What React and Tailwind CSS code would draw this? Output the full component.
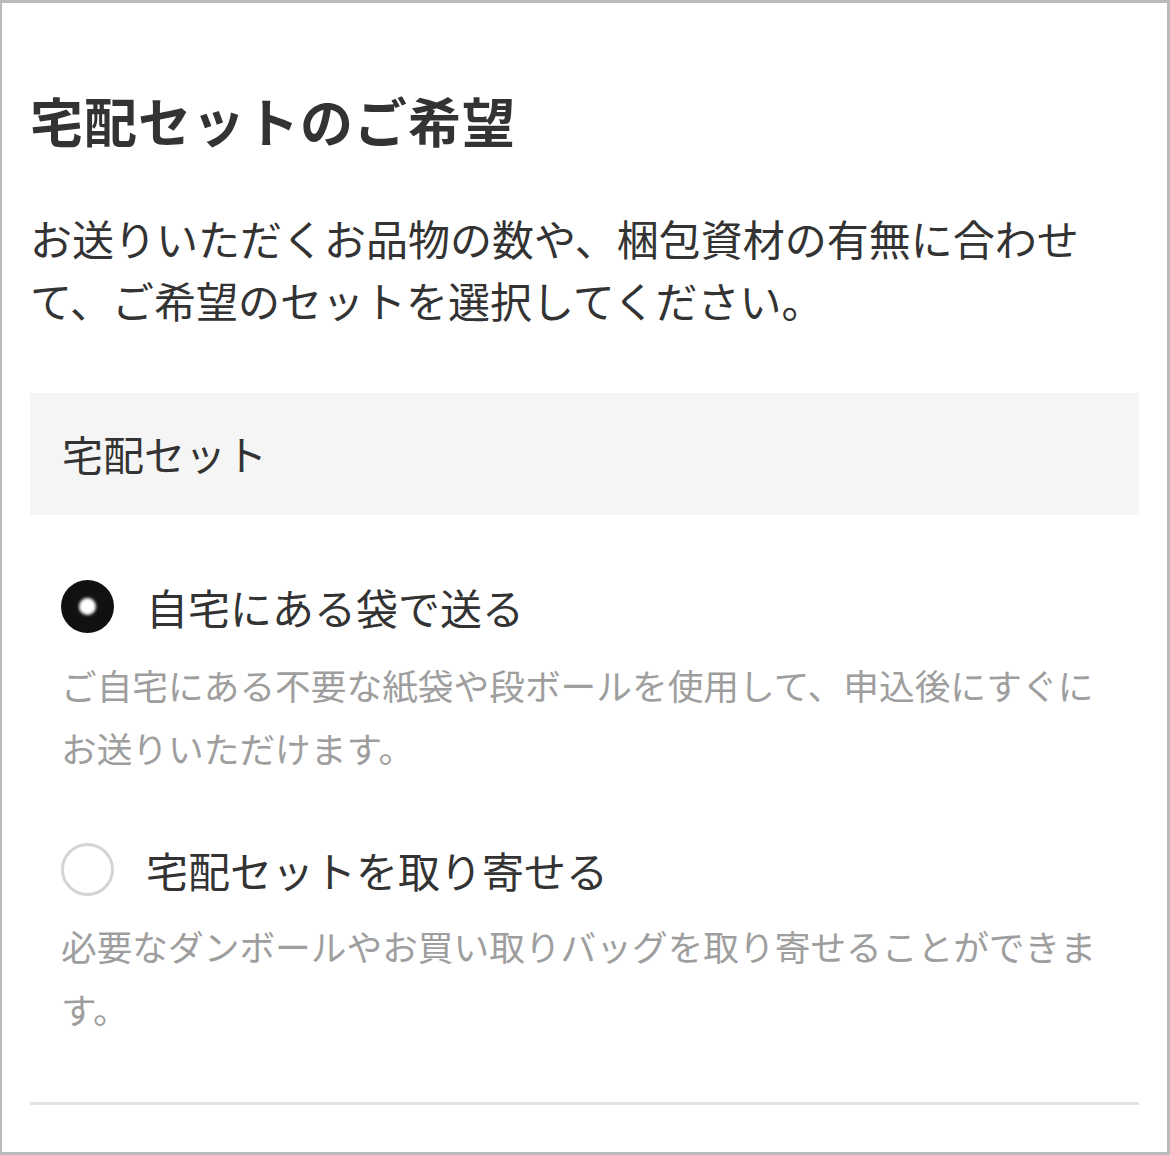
import React from "react";

const font = { fontFamily: '"Noto Sans CJK JP", "Noto Sans", sans-serif' };

function Radio({ checked }) {
  if (checked) {
    return (
      <span className="flex h-[53px] w-[53px] shrink-0 items-center justify-center rounded-full bg-[#111]">
        <span className="h-[17px] w-[17px] rounded-full bg-white blur-[1.5px]" />
      </span>
    );
  }
  return <span className="h-[53px] w-[53px] shrink-0 rounded-full border-[3px] border-[#d4d4d4] bg-white" />;
}

function Option({ checked, label, desc, className, descClass }) {
  return (
    <div className={className}>
      <label className="flex items-center gap-[32px] pl-[31px]">
        <Radio checked={checked} />
        <span className="text-[42px] leading-[53px] text-[#333]">{label}</span>
      </label>
      <p className={`${descClass} pl-[31px] pr-[20px] text-[35.7px] leading-[63px] text-[#9e9e9e]`}>{desc}</p>
    </div>
  );
}

export default function App() {
  return (
    <div style={font} className="h-[1155px] w-[1170px] border-[3px] border-l-2 border-[#bbb] bg-white px-[28px] pt-[81px]">
      <h1 className="text-[53px] font-bold leading-[72px] tracking-[1px] text-[#333]">宅配セットのご希望</h1>
      <p className="mt-[51px] text-[42px] leading-[62px] text-[#333]">
        お送りいただくお品物の数や、梱包資材の有無に合わせて、ご希望のセットを選択してください。
      </p>

      <div className="mt-[62px] flex h-[122px] items-center bg-[#f5f5f5] px-[32px]">
        <span className="text-[41px] text-[#333]">宅配セット</span>
      </div>

      <Option
        className="mt-[65px]"
        descClass="mt-[20px]"
        checked
        label="自宅にある袋で送る"
        desc="ご自宅にある不要な紙袋や段ボールを使用して、申込後にすぐにお送りいただけます。"
      />
      <Option
        className="mt-[64px]"
        descClass="mt-[18px]"
        label="宅配セットを取り寄せる"
        desc="必要なダンボールやお買い取りバッグを取り寄せることができます。"
      />

      <div className="mt-[62px] h-[3px] bg-[#e3e3e3]" />
    </div>
  );
}
